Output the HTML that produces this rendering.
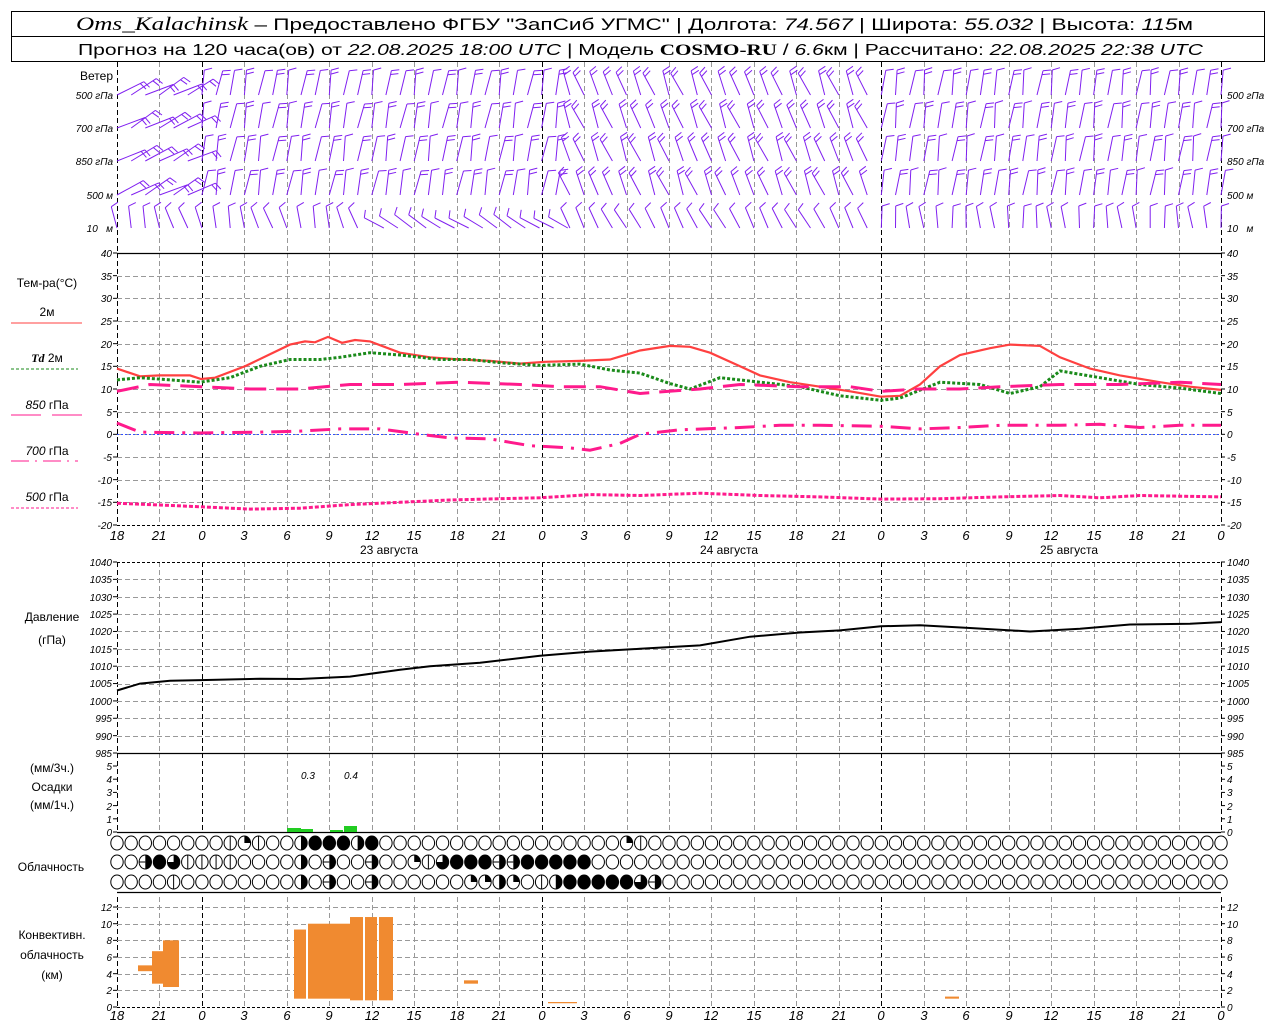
<!DOCTYPE html>
<html><head><meta charset="utf-8"><style>
html,body{margin:0;padding:0;background:#fff}
svg{display:block}
.t{font-family:"Liberation Sans",sans-serif;font-size:12px;fill:#000}
.ti{font-family:"Liberation Sans",sans-serif;font-style:italic;font-size:10px;fill:#000}
.ax{font-family:"Liberation Sans",sans-serif;font-style:italic;font-size:13px;fill:#000}
</style></head><body>
<svg id="s" width="1280" height="1024" viewBox="0 0 1280 1024" xmlns="http://www.w3.org/2000/svg">
<rect width="1280" height="1024" fill="#fff"/>
<g id="grid"></g>
<g id="data"></g>
<rect x="11.5" y="11.5" width="1253" height="50" fill="none" stroke="#000"/>
<line x1="11" y1="36.5" x2="1265" y2="36.5" stroke="#000"/>
<text x="76" y="30" font-size="17" font-family="Liberation Sans,sans-serif" textLength="1117" lengthAdjust="spacingAndGlyphs"><tspan font-family="Liberation Serif,serif" font-style="italic" font-size="19">Oms_Kalachinsk</tspan> – Предоставлено ФГБУ "ЗапСиб УГМС" | Долгота: <tspan font-style="italic">74.567</tspan> | Широта: <tspan font-style="italic">55.032</tspan> | Высота: <tspan font-style="italic">115</tspan>м</text>
<text x="78" y="55" font-size="16" font-family="Liberation Sans,sans-serif" textLength="1125" lengthAdjust="spacingAndGlyphs">Прогноз на 120 часа(ов) от <tspan font-style="italic">22.08.2025 18:00 UTC</tspan>  | Модель <tspan font-family="Liberation Serif,serif" font-weight="bold">COSMO-RU</tspan> / <tspan font-style="italic">6.6</tspan>км | Рассчитано: <tspan font-style="italic">22.08.2025 22:38 UTC</tspan></text>
<text class="t" x="113" y="80" text-anchor="end">Ветер</text>
<text class="ti" x="113" y="99" text-anchor="end">500 гПа</text>
<text class="ti" x="113" y="132" text-anchor="end">700 гПа</text>
<text class="ti" x="113" y="165" text-anchor="end">850 гПа</text>
<text class="ti" x="113" y="199" text-anchor="end">500 м</text>
<text class="ti" x="113" y="232" text-anchor="end">10 &#160; м</text>
<text class="ti" x="1227" y="99">500 гПа</text>
<text class="ti" x="1227" y="132">700 гПа</text>
<text class="ti" x="1227" y="165">850 гПа</text>
<text class="ti" x="1227" y="199">500 м</text>
<text class="ti" x="1227" y="232">10 &#160; м</text>
<text class="t" x="47" y="287" text-anchor="middle">Тем-ра(°С)</text>
<text class="t" x="47" y="316" text-anchor="middle">2м</text>
<line x1="11" y1="323" x2="82" y2="323" stroke="#ff4040" stroke-width="1"/>
<text class="t" x="47" y="362" text-anchor="middle"><tspan font-style="italic" font-weight="bold" font-family="Liberation Serif,serif">Td</tspan>  2м</text>
<line x1="11" y1="369" x2="78" y2="369" stroke="#1a8a1a" stroke-dasharray="3,2"/>
<text class="t" x="47" y="409" text-anchor="middle"><tspan font-style="italic">850</tspan> гПа</text>
<line x1="11" y1="415" x2="41" y2="415" stroke="#ff1a8c"/><line x1="52" y1="415" x2="82" y2="415" stroke="#ff1a8c"/>
<text class="t" x="47" y="455" text-anchor="middle"><tspan font-style="italic">700</tspan> гПа</text>
<line x1="11" y1="461" x2="78" y2="461" stroke="#ff1a8c" stroke-dasharray="18,6,2,6"/>
<text class="t" x="47" y="501" text-anchor="middle"><tspan font-style="italic">500</tspan> гПа</text>
<line x1="11" y1="508" x2="78" y2="508" stroke="#ff1a8c" stroke-dasharray="3,2"/>
<g class="ti" text-anchor="end">
<text x="112" y="257">40</text><text x="112" y="280">35</text><text x="112" y="302">30</text><text x="112" y="325">25</text><text x="112" y="348">20</text><text x="112" y="370">15</text><text x="112" y="393">10</text><text x="112" y="416">5</text><text x="112" y="438">0</text><text x="112" y="461">-5</text><text x="112" y="484">-10</text><text x="112" y="506">-15</text><text x="112" y="529">-20</text>
</g>
<g class="ti">
<text x="1227" y="257">40</text><text x="1227" y="280">35</text><text x="1227" y="302">30</text><text x="1227" y="325">25</text><text x="1227" y="348">20</text><text x="1227" y="370">15</text><text x="1227" y="393">10</text><text x="1227" y="416">5</text><text x="1227" y="438">0</text><text x="1227" y="461">-5</text><text x="1227" y="484">-10</text><text x="1227" y="506">-15</text><text x="1227" y="529">-20</text>
</g>
<g class="ax" text-anchor="middle">
<text x="117" y="540">18</text><text x="159" y="540">21</text><text x="202" y="540">0</text><text x="244" y="540">3</text><text x="287" y="540">6</text><text x="329" y="540">9</text><text x="372" y="540">12</text><text x="414" y="540">15</text><text x="457" y="540">18</text><text x="499" y="540">21</text><text x="542" y="540">0</text><text x="584" y="540">3</text><text x="627" y="540">6</text><text x="669" y="540">9</text><text x="711" y="540">12</text><text x="754" y="540">15</text><text x="796" y="540">18</text><text x="839" y="540">21</text><text x="881" y="540">0</text><text x="924" y="540">3</text><text x="966" y="540">6</text><text x="1009" y="540">9</text><text x="1051" y="540">12</text><text x="1094" y="540">15</text><text x="1136" y="540">18</text><text x="1179" y="540">21</text><text x="1221" y="540">0</text>
</g>
<text class="t" x="389" y="554" text-anchor="middle" font-size="13">23 августа</text>
<text class="t" x="729" y="554" text-anchor="middle" font-size="13">24 августа</text>
<text class="t" x="1069" y="554" text-anchor="middle" font-size="13">25 августа</text>
<text class="t" x="52" y="621" text-anchor="middle">Давление</text>
<text class="t" x="52" y="644" text-anchor="middle">(гПа)</text>
<g class="ti" text-anchor="end">
<text x="112" y="566">1040</text><text x="112" y="583">1035</text><text x="112" y="601">1030</text><text x="112" y="618">1025</text><text x="112" y="635">1020</text><text x="112" y="653">1015</text><text x="112" y="670">1010</text><text x="112" y="687">1005</text><text x="112" y="705">1000</text><text x="112" y="722">995</text><text x="112" y="740">990</text><text x="112" y="757">985</text>
</g>
<g class="ti">
<text x="1227" y="566">1040</text><text x="1227" y="583">1035</text><text x="1227" y="601">1030</text><text x="1227" y="618">1025</text><text x="1227" y="635">1020</text><text x="1227" y="653">1015</text><text x="1227" y="670">1010</text><text x="1227" y="687">1005</text><text x="1227" y="705">1000</text><text x="1227" y="722">995</text><text x="1227" y="740">990</text><text x="1227" y="757">985</text>
</g>
<text class="t" x="52" y="772" text-anchor="middle">(мм/3ч.)</text>
<text class="t" x="52" y="791" text-anchor="middle">Осадки</text>
<text class="t" x="52" y="809" text-anchor="middle">(мм/1ч.)</text>
<g class="ti" text-anchor="end">
<text x="112" y="836">0</text><text x="112" y="823">1</text><text x="112" y="810">2</text><text x="112" y="796">3</text><text x="112" y="783">4</text><text x="112" y="770">5</text>
</g>
<g class="ti">
<text x="1227" y="836">0</text><text x="1227" y="823">1</text><text x="1227" y="810">2</text><text x="1227" y="796">3</text><text x="1227" y="783">4</text><text x="1227" y="770">5</text>
</g>
<text class="ti" x="308" y="779" text-anchor="middle" font-size="13">0.3</text>
<text class="ti" x="351" y="779" text-anchor="middle" font-size="13">0.4</text>
<text class="t" x="51" y="871" text-anchor="middle">Облачность</text>
<text class="t" x="52" y="939" text-anchor="middle">Конвективн.</text>
<text class="t" x="52" y="959" text-anchor="middle">облачность</text>
<text class="t" x="52" y="979" text-anchor="middle">(км)</text>
<g class="ti" text-anchor="end">
<text x="112" y="1011">0</text><text x="112" y="994">2</text><text x="112" y="978">4</text><text x="112" y="961">6</text><text x="112" y="944">8</text><text x="112" y="928">10</text><text x="112" y="911">12</text>
</g>
<g class="ti">
<text x="1227" y="1011">0</text><text x="1227" y="994">2</text><text x="1227" y="978">4</text><text x="1227" y="961">6</text><text x="1227" y="944">8</text><text x="1227" y="928">10</text><text x="1227" y="911">12</text>
</g>
<g class="ax" text-anchor="middle">
<text x="117" y="1020">18</text><text x="159" y="1020">21</text><text x="202" y="1020">0</text><text x="244" y="1020">3</text><text x="287" y="1020">6</text><text x="329" y="1020">9</text><text x="372" y="1020">12</text><text x="414" y="1020">15</text><text x="457" y="1020">18</text><text x="499" y="1020">21</text><text x="542" y="1020">0</text><text x="584" y="1020">3</text><text x="627" y="1020">6</text><text x="669" y="1020">9</text><text x="711" y="1020">12</text><text x="754" y="1020">15</text><text x="796" y="1020">18</text><text x="839" y="1020">21</text><text x="881" y="1020">0</text><text x="924" y="1020">3</text><text x="966" y="1020">6</text><text x="1009" y="1020">9</text><text x="1051" y="1020">12</text><text x="1094" y="1020">15</text><text x="1136" y="1020">18</text><text x="1179" y="1020">21</text><text x="1221" y="1020">0</text>
</g>
</svg>
<script>
var NS="http://www.w3.org/2000/svg";
var G=document.getElementById("grid"),D=document.getElementById("data");
function el(p,n,a){var e=document.createElementNS(NS,n);for(var k in a)e.setAttribute(k,a[k]);p.appendChild(e);return e;}
function L(p,x1,y1,x2,y2,c,w,da){var a={x1:x1,y1:y1,x2:x2,y2:y2,stroke:c,"stroke-width":w||1};if(da)a["stroke-dasharray"]=da;return el(p,"line",a);}
var X0=117,X1=1221,DX=(X1-X0)/78;
function hx(h){return X0+h*DX;}
var panels=[[62,253],[253,525],[562,753],[753,832],[897,1007]];
panels.forEach(function(pp){
 for(var k=0;k<=26;k++){var x=Math.round(hx(k*3))+0.5;var day=(k%8==2)||k==0||k==26;
  L(G,x,pp[0],x,pp[1],day?"#000":"#999",1,"5,3");}
});
function hg(y){L(G,X0,y,X1,y,"#999",1,"5,3");}
for(var v=35;v>=-15;v-=5){hg(Math.round(253+(40-v)*4.533)+0.5);}
for(var p=1035;p>=990;p-=5){hg(Math.round(562+(1040-p)*3.473)+0.5);}
for(var v=2;v<=12;v+=2){hg(Math.round(1007-v*8.33)+0.5);}
L(G,X0,253.5,X1,253.5,"#000",1.2);L(G,X0,753.5,X1,753.5,"#000",1.2);
L(G,X0,562.5,X1,562.5,"#000",1,"3,2");L(G,X0,525.5,X1,525.5,"#000",1,"3,2");
L(G,X0,832.5,X1,832.5,"#000",1.2);L(G,X0,892.5,X1,892.5,"#000",1.2);L(G,X0,1007.5,X1,1007.5,"#000",1,"3,2");
function ticks(ys){ys.forEach(function(y){L(G,X0-4,y,X0,y,"#000");L(G,X1,y,X1+4,y,"#000");});}
var t=[];for(var v=40;v>=-20;v-=5)t.push(253+(40-v)*4.533);ticks(t);
t=[];for(var p=1040;p>=985;p-=5)t.push(562+(1040-p)*3.473);ticks(t);
t=[];for(var v=0;v<=5;v++)t.push(832-v*13.2);ticks(t);
t=[];for(var v=0;v<=12;v+=2)t.push(1007-v*8.33);ticks(t);
L(G,X0,434.5,X1,434.5,"#3050ff",1,"2,2");
function poly(pts,fy,c,w,da){var s=pts.map(function(q){return q[0]+","+fy(q[1]).toFixed(1)}).join(" ");var a={points:s,fill:"none",stroke:c,"stroke-width":w};if(da)a["stroke-dasharray"]=da;el(D,"polyline",a);}
function ty(v){return 253+(40-v)*4.533;}
poly([[117,14.5],[140,12.8],[160,13],[190,13],[201,12.2],[215,12.5],[245,15],[290,19.8],[305,20.5],[315,20.3],[328,21.5],[342,20.2],[355,20.8],[370,20.5],[400,18],[430,17],[460,16.5],[490,16.2],[520,15.6],[545,16],[580,16.2],[610,16.5],[640,18.5],[670,19.5],[690,19.3],[710,18],[740,15],[760,13],[790,11.5],[820,10.5],[850,9.5],[881,8.3],[900,8.5],[920,11],[940,15],[960,17.5],[990,19],[1010,19.8],[1040,19.5],[1060,17],[1090,14.5],[1120,13],[1160,11.5],[1190,10.5],[1221,9.8]],ty,"#ff4040",2.2);
poly([[117,12],[140,12.5],[170,12],[200,11.5],[230,12.5],[260,15],[290,16.5],[320,16.5],[340,17],[370,18],[400,17.5],[440,16.5],[470,16.5],[500,15.8],[540,15.2],[580,15.5],[610,14.2],[640,13.5],[670,11.2],[690,10],[720,12.5],[760,11.5],[800,10.5],[840,8.5],[881,7.5],[900,8],[940,11.5],[980,11],[1010,9],[1040,10.5],[1060,14],[1100,12.5],[1140,11],[1180,10.2],[1221,9]],ty,"#1a8a1a",3,"3,2");
poly([[117,9.5],[150,11],[201,10.5],[250,10],[300,10],[350,11],[400,11],[460,11.5],[520,11],[560,10.5],[600,10.5],[640,9],[700,10],[740,11],[800,10.5],[850,10.5],[881,9.5],[920,10],[960,10],[1000,10.5],[1060,11],[1120,11],[1180,11.5],[1221,11]],ty,"#ff1a8c",3,"22,10");
poly([[117,2.5],[140,0.5],[200,0.3],[260,0.5],[300,0.7],[340,1.2],[380,1.2],[420,0],[450,-0.8],[490,-1],[530,-2.5],[570,-3],[590,-3.5],[620,-2],[640,0],[680,1],[740,1.5],[780,2],[820,2],[880,1.8],[920,1.2],[960,1.5],[1000,2],[1060,2],[1100,2.2],[1140,1.5],[1180,2],[1221,2]],ty,"#ff1a8c",3,"20,8,3,8");
poly([[117,-15.2],[150,-15.5],[201,-16],[250,-16.5],[300,-16.3],[350,-15.5],[400,-15],[450,-14.5],[500,-14.2],[540,-14],[590,-13.3],[640,-13.5],[700,-13],[760,-13.5],[820,-13.8],[881,-14.3],[940,-14.2],[1000,-13.8],[1060,-13.5],[1100,-14],[1140,-13.5],[1221,-13.8]],ty,"#ff1a8c",3,"4,2");
poly([[117,1003],[140,1005],[170,1005.8],[201,1006],[260,1006.4],[300,1006.3],[350,1007],[400,1009],[430,1010],[480,1011],[540,1013],[590,1014.2],[640,1015],[700,1016],[750,1018.5],[800,1019.7],[840,1020.3],[881,1021.5],[920,1021.8],[970,1021],[1030,1020],[1080,1020.8],[1130,1022],[1190,1022.2],[1221,1022.7]],function(p){return 562+(1040-p)*3.473;},"#000",2);
[[287,301,828],[301,313,829],[330,343,830],[344,357,826]].forEach(function(b){el(D,"rect",{x:b[0],y:b[2],width:b[1]-b[0],height:832-b[2],fill:"#22cc22"});});
function ky(v){return 1007-v*8.33;}
[[138,152,4.3,5.0],[152,163,2.8,6.7],[163,179,2.4,8.0],[294,306,1,9.3],[308,350,1,10],[350,363,0.8,10.8],[365,377,0.8,10.8],[379,393,0.8,10.8],[464,478,2.8,3.2],[548,577,0.45,0.6],[945,959,1.0,1.25]].forEach(function(b){el(D,"rect",{x:b[0],y:ky(b[3]),width:b[1]-b[0],height:ky(b[2])-ky(b[3]),fill:"#f08a30"});});
var rows=[[843,{8:'l',9:'q',10:'l',13:'h',14:'f',15:'f',16:'f',17:'h',18:'f',36:'q',37:'l'}],
[862,{2:'m',3:'f',4:'t',5:'l',6:'l',7:'l',8:'l',13:'h',15:'m',18:'m',21:'q',22:'l',23:'t',24:'f',25:'f',26:'f',27:'m',28:'m',29:'f',30:'f',31:'f',32:'f',33:'f'}],
[882,{4:'l',13:'h',15:'m',18:'m',25:'q',26:'q',27:'h',28:'q',30:'l',31:'h',32:'f',33:'f',34:'f',35:'f',36:'f',37:'t',38:'m'}]];
rows.forEach(function(r){var y=r[0];for(var i=0;i<=78;i++){var x=hx(i),c=r[1][i]||'e',rx=6.2,ry=7;
 if(c=='f'){el(D,"ellipse",{cx:x,cy:y,rx:rx,ry:ry,fill:"#000",stroke:"#000"});continue;}
 el(D,"ellipse",{cx:x,cy:y,rx:rx,ry:ry,fill:"#fff",stroke:"#000","stroke-width":1});
 if(c=='l')L(D,x,y-ry,x,y+ry,"#000");
 if(c=='h'||c=='m')el(D,"path",{d:"M"+x+","+(y-ry)+" A"+rx+","+ry+" 0 0 1 "+x+","+(y+ry)+" Z",fill:"#000"});
 if(c=='m')L(D,x-rx,y,x,y,"#000");
 if(c=='q')el(D,"path",{d:"M"+x+","+y+" L"+x+","+(y-ry)+" A"+rx+","+ry+" 0 0 1 "+(x+rx)+","+y+" Z",fill:"#000"});
 if(c=='t'){el(D,"path",{d:"M"+x+","+y+" L"+x+","+(y-ry)+" A"+rx+","+ry+" 0 1 1 "+(x-rx)+","+y+" Z",fill:"#000"});}
}});
function barb(bx,by,d,len,n){var r=d*Math.PI/180,ux=Math.sin(r),uy=-Math.cos(r);
 var tx=bx+ux*len,ty2=by+uy*len;var s="M"+bx.toFixed(1)+","+by+" L"+tx.toFixed(1)+","+ty2.toFixed(1);
 var px=-uy,py=ux;var bxv=px+0.35*ux,byv=py+0.35*uy,m=Math.hypot(bxv,byv);bxv/=m;byv/=m;
 for(var k=0;k<n;k++){var sx=tx-ux*k*4,sy=ty2-uy*k*4;s+=" M"+sx.toFixed(1)+","+sy.toFixed(1)+" l"+(bxv*8).toFixed(1)+","+(byv*8).toFixed(1);}
 el(D,"path",{d:s,fill:"none",stroke:"#8020f0","stroke-width":1});}
var ry=[95,128,161,195];
function dirUpper(x,row){
 if(x<195)return 62+8*Math.sin(x*0.7+row);
 if(x<560)return 10+6*Math.sin(x*0.3+row);
 if(x<880)return -22+8*Math.sin(x*0.2+row);
 return 8+6*Math.sin(x*0.25+row);}
for(var row=0;row<4;row++){for(var i=0;i<=78;i++){var x=hx(i);var d=dirUpper(x,row);
 var len=x<195?30:25;barb(x,ry[row],d,len,x<195?2:(x>560&&x<880?2:1+(i%2)));}}
for(var i=0;i<=78;i++){var x=hx(i);var d;
 if(x<370)d=-15+10*Math.sin(i);else if(x<560)d=-58+6*Math.sin(i);else if(x<880)d=-28+6*Math.sin(i);else d=-5+8*Math.sin(i*1.3);
 barb(x+(x>=370&&x<560?12:0),228,d,22,1);}
</script>
</body></html>
